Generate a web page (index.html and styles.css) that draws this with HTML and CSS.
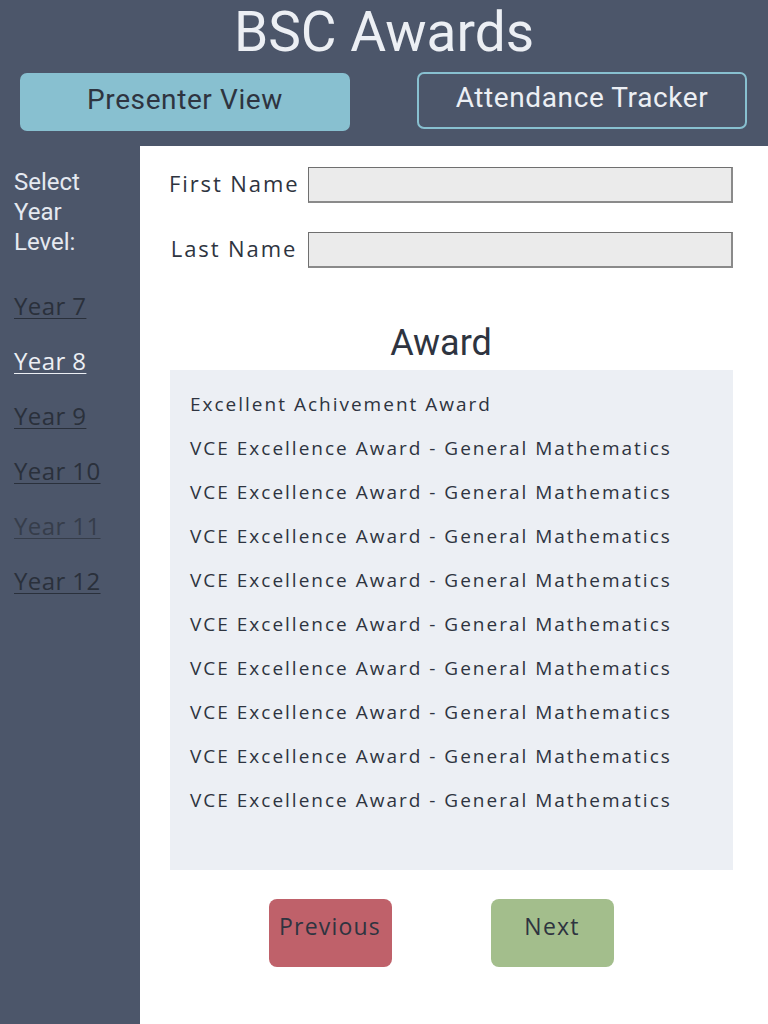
FILE: index.html
```html
<!DOCTYPE html>
<html lang="en">
<head>
<meta charset="utf-8">
<title>BSC Awards</title>
<link rel="stylesheet" href="styles.css">
</head>
<body>
<header class="top">
  <h1 class="title">BSC Awards</h1>
  <nav class="views">
    <a class="view view-active" href="#">Presenter View</a>
    <a class="view view-outline" href="#">Attendance Tracker</a>
  </nav>
</header>
<div class="layout">
  <aside class="sidebar">
    <p class="select-label">Select<br>Year<br>Level:</p>
    <ul class="years">
      <li><a class="year" href="#">Year 7</a></li>
      <li><a class="year year-current" href="#">Year 8</a></li>
      <li><a class="year" href="#">Year 9</a></li>
      <li><a class="year" href="#">Year 10</a></li>
      <li><a class="year year-visited" href="#">Year 11</a></li>
      <li><a class="year" href="#">Year 12</a></li>
    </ul>
  </aside>
  <main class="main">
    <div class="field">
      <label class="field-label" for="fn">First Name</label>
      <input class="field-input" id="fn" type="text">
    </div>
    <div class="field">
      <label class="field-label" for="ln">Last Name</label>
      <input class="field-input" id="ln" type="text">
    </div>
    <h2 class="award-title">Award</h2>
    <ul class="awards">
      <li>Excellent Achivement Award</li>
      <li>VCE Excellence Award - General Mathematics</li>
      <li>VCE Excellence Award - General Mathematics</li>
      <li>VCE Excellence Award - General Mathematics</li>
      <li>VCE Excellence Award - General Mathematics</li>
      <li>VCE Excellence Award - General Mathematics</li>
      <li>VCE Excellence Award - General Mathematics</li>
      <li>VCE Excellence Award - General Mathematics</li>
      <li>VCE Excellence Award - General Mathematics</li>
      <li>VCE Excellence Award - General Mathematics</li>
    </ul>
    <div class="pager">
      <button class="pager-btn pager-prev" type="button">Previous</button>
      <button class="pager-btn pager-next" type="button">Next</button>
    </div>
  </main>
</div>
</body>
</html>
```
FILE: styles.css
```css
* { box-sizing: border-box; }
html, body { margin: 0; padding: 0; }
body {
  width: 768px;
  height: 1024px;
  overflow: hidden;
  background: #4c566a;
  font-family: "Open Sans", "Liberation Sans", sans-serif;
  display: flex;
  flex-direction: column;
}
.top {
  background: #4c566a;
  padding: 0 0 15px;
}
.title {
  margin: 0;
  font-family: Roboto, "Liberation Sans", sans-serif;
  font-weight: 400;
  font-size: 55px;
  line-height: 64px;
  text-align: center;
  color: #eceff4;
}
.views {
  display: flex;
  justify-content: space-between;
  padding: 0 21px 0 20px;
  margin-top: 8px;
}
.view {
  width: 330px;
  height: 58px;
  border-radius: 7px;
  display: flex;
  align-items: center;
  justify-content: center;
  padding-bottom: 6px;
  font-family: Roboto, "Liberation Sans", sans-serif;
  font-weight: 400;
  font-size: 28px;
  text-decoration: none;
  letter-spacing: 0.6px;
}
.view-active {
  background: #88c0d0;
  color: #2e3440;
  margin-top: 1px;
}
.view-outline {
  border: 2px solid #88c0d0;
  color: #eceff4;
  height: 57px;
}
.layout {
  flex: 1;
  display: flex;
}
.sidebar {
  width: 140px;
  background: #4c566a;
  padding: 21px 0 0 14px;
}
.select-label {
  margin: 0;
  font-family: Roboto, "Liberation Sans", sans-serif;
  font-size: 24px;
  line-height: 30px;
  color: #e5e9f0;
}
.years {
  list-style: none;
  margin: 31px 0 0;
  padding: 0;
  display: flex;
  flex-direction: column;
  gap: 20px;
}
.year {
  font-size: 24px;
  font-weight: 500;
  line-height: 35px;
  color: #2a303b;
  text-decoration: underline;
  text-underline-offset: 3px;
  text-decoration-thickness: 1px;
  letter-spacing: 0.4px;
}
.year-current { color: #eceff4; }
.year-visited { color: #363d4a; }
.main {
  flex: 1;
  background: #ffffff;
  padding: 21px 35px 0 29px;
}
.field {
  display: flex;
  align-items: center;
  gap: 9px;
  height: 36px;
  margin-bottom: 29px;
}
.field-label {
  width: 130px;
  text-align: center;
  font-size: 22px;
  line-height: 24px;
  letter-spacing: 1.9px;
  padding-bottom: 5px;
  color: #2e3440;
  white-space: nowrap;
}
.field-input {
  width: 425px;
  height: 36px;
  margin: 0;
  background: #ebebeb;
  border: 1px solid #6f6f6f;
  border-right: 2px solid #8a8a8a;
  border-bottom: 2px solid #8a8a8a;
}
.award-title {
  margin: 54px 20px 0 0;
  font-family: Roboto, "Liberation Sans", sans-serif;
  font-weight: 400;
  font-size: 36px;
  line-height: 42px;
  text-align: center;
  color: #2e3440;
}
.awards {
  list-style: none;
  margin: 6px 0 0 1px;
  padding: 12px 20px 0;
  height: 500px;
  background: #eceff4;
}
.awards li {
  font-size: 19px;
  line-height: 44px;
  letter-spacing: 2px;
  color: #2e3440;
  white-space: nowrap;
}
.pager {
  display: flex;
  justify-content: center;
  gap: 99px;
  margin: 29px 20px 0 0;
}
.pager-btn {
  width: 123px;
  height: 68px;
  border: none;
  border-radius: 8px;
  font-family: "Open Sans", "Liberation Sans", sans-serif;
  font-size: 23px;
  letter-spacing: 1.2px;
  color: #2e3440;
  padding: 11px 0 0;
  display: flex;
  justify-content: center;
  align-items: flex-start;
}
.pager-prev { background: #bf616a; }
.pager-next { background: #a3be8c; }
```
